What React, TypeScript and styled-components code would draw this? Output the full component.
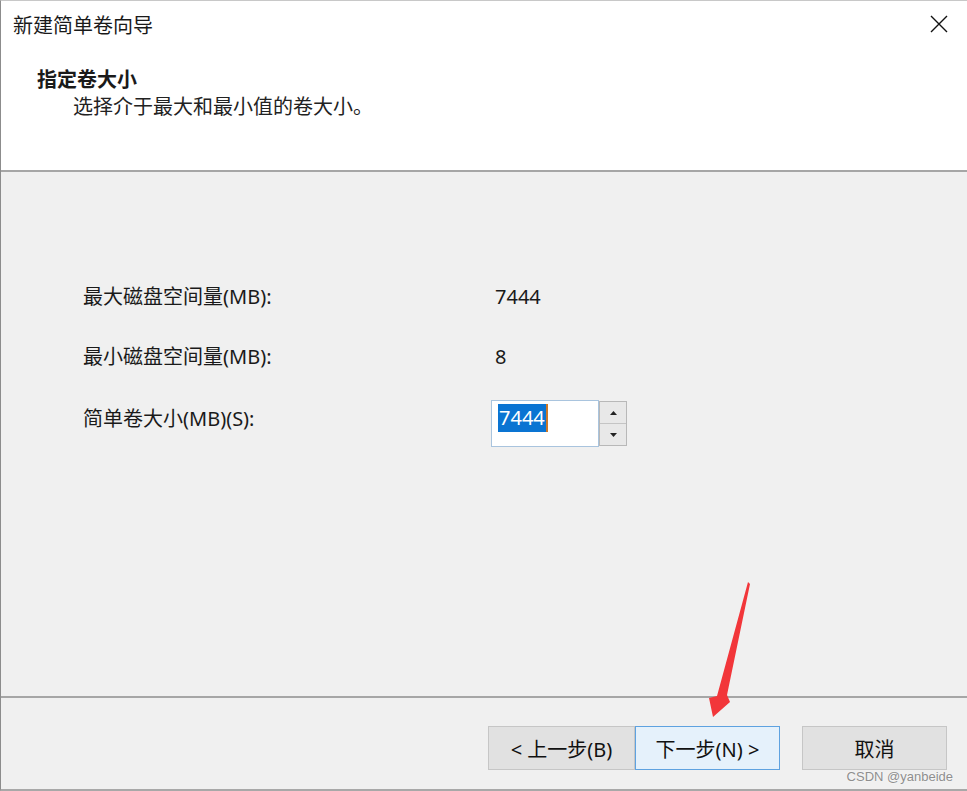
import styled, { createGlobalStyle } from 'styled-components'

const GlobalStyle = createGlobalStyle`
  html, body {
    margin: 0;
    padding: 0;
    background: #ffffff;
  }
  body {
    font-family: 'Noto Sans', 'Noto Sans CJK SC', sans-serif;
    color: #1a1a1a;
  }
`

const Window = styled.div`
  position: relative;
  box-sizing: border-box;
  width: 967px;
  height: 791px;
  display: flex;
  flex-direction: column;
  border-left: 1px solid #8c8c8c;
  border-top: 1px solid #c8c8c8;
  border-bottom: 2px solid #a8a8a8;
  background: #f0f0f0;
  overflow: hidden;
`

const Header = styled.div`
  height: 169px;
  flex-shrink: 0;
  background: #ffffff;
  display: flex;
  flex-direction: column;
  border-bottom: 2px solid #a6a6a6;
`

const TitleBar = styled.div`
  height: 46px;
  display: flex;
  align-items: center;
  justify-content: space-between;
  padding: 0 17px 0 12px;
`

const Title = styled.span`
  font-size: 20px;
`

const CloseButton = styled.button`
  width: 22px;
  height: 22px;
  padding: 0;
  border: none;
  background: transparent;
  display: flex;
  align-items: center;
  justify-content: center;
`

const Heading = styled.div`
  margin: 20px 0 0 36px;
  font-size: 20px;
  font-weight: 700;
  line-height: 26px;
`

const SubHeading = styled.div`
  margin: 1px 0 0 72px;
  font-size: 20px;
  line-height: 26px;
  color: #222;
`

const Body = styled.div`
  flex: 1;
  padding: 111px 0 0 82px;
  display: flex;
  flex-direction: column;
  gap: 32px;
`

const Row = styled.div<{ $tall?: boolean }>`
  display: grid;
  grid-template-columns: 408px auto;
  align-items: ${(p) => (p.$tall ? 'flex-start' : 'center')};
  height: ${(p) => (p.$tall ? '47px' : '28px')};
  margin-top: ${(p) => (p.$tall ? '-3px' : '0')};
`

const Label = styled.span<{ $offset?: number }>`
  font-size: 20px;
  line-height: 28px;
  padding-top: ${(p) => p.$offset ?? 0}px;
`

const Value = styled.span`
  font-size: 20px;
  line-height: 28px;
  padding-left: 4px;
`

const Spin = styled.div`
  display: flex;
  height: 47px;
`

const SpinInput = styled.div`
  box-sizing: border-box;
  width: 108px;
  height: 47px;
  background: #fff;
  border: 1px solid #a9c4de;
  padding: 3px 0 0 6px;
`

const Selected = styled.span`
  display: inline-block;
  background: #0a74d2;
  color: #fff;
  font-size: 20px;
  line-height: 28px;
  padding: 0 1px;
  border-right: 2px solid #c9782a;
`

const SpinButtons = styled.div`
  display: flex;
  flex-direction: column;
  width: 28px;
  height: 45px;
  margin-top: 1px;
  border: 1px solid #b8b8b8;
  box-sizing: border-box;
`

const SpinButton = styled.button<{ $down?: boolean }>`
  flex: 1;
  padding: 0;
  border: none;
  border-top: ${(p) => (p.$down ? '1px solid #c4c4c4' : 'none')};
  background: #e8e8e8;
  display: flex;
  align-items: center;
  justify-content: center;
`

const Footer = styled.div`
  height: 93px;
  flex-shrink: 0;
  border-top: 2px solid #a6a6a6;
  box-sizing: border-box;
  display: flex;
  justify-content: flex-end;
  align-items: flex-start;
  padding: 28px 20px 0 0;
`

const ButtonGroup = styled.div`
  display: flex;
  margin-right: 22px;
`

const DialogButton = styled.button<{ $primary?: boolean; $width: number }>`
  box-sizing: border-box;
  width: ${(p) => p.$width}px;
  height: 44px;
  font-family: inherit;
  font-size: 20px;
  color: #111;
  background: ${(p) => (p.$primary ? '#e5f1fb' : '#e1e1e1')};
  border: 1px solid ${(p) => (p.$primary ? '#5ea2e0' : '#c6c6c6')};
  padding: 0;
`

const Arrow = styled.svg`
  position: absolute;
  left: 0;
  top: 0;
  pointer-events: none;
`

const Watermark = styled.span`
  position: absolute;
  right: 14px;
  bottom: 5px;
  font-family: 'Liberation Sans', Arial, sans-serif;
  font-size: 13px;
  color: #8e8e8e;
  text-shadow: 0 0 2px #fff;
`

const App = () => {
  return (
    <>
      <GlobalStyle />
      <Window>
        <Header>
          <TitleBar>
            <Title>新建简单卷向导</Title>
            <CloseButton aria-label='关闭'>
              <svg width='18' height='18' viewBox='0 0 18 18'>
                <path d='M1 1 L17 17 M17 1 L1 17' stroke='#111' strokeWidth='1.4' fill='none' />
              </svg>
            </CloseButton>
          </TitleBar>
          <Heading>指定卷大小</Heading>
          <SubHeading>选择介于最大和最小值的卷大小。</SubHeading>
        </Header>
        <Body>
          <Row>
            <Label>最大磁盘空间量(MB):</Label>
            <Value>7444</Value>
          </Row>
          <Row>
            <Label>最小磁盘空间量(MB):</Label>
            <Value>8</Value>
          </Row>
          <Row $tall>
            <Label $offset={5}>简单卷大小(MB)(S):</Label>
            <Spin>
              <SpinInput>
                <Selected>7444</Selected>
              </SpinInput>
              <SpinButtons>
                <SpinButton aria-label='增加'>
                  <svg width='7' height='4' viewBox='0 0 7 4'>
                    <path d='M3.5 0 L7 4 L0 4 Z' fill='#222' />
                  </svg>
                </SpinButton>
                <SpinButton $down aria-label='减少'>
                  <svg width='7' height='4' viewBox='0 0 7 4'>
                    <path d='M0 0 L7 0 L3.5 4 Z' fill='#222' />
                  </svg>
                </SpinButton>
              </SpinButtons>
            </Spin>
          </Row>
        </Body>
        <Footer>
          <ButtonGroup>
            <DialogButton $width={147}>&lt; 上一步(B)</DialogButton>
            <DialogButton $primary $width={145}>下一步(N) &gt;</DialogButton>
          </ButtonGroup>
          <DialogButton $width={145}>取消</DialogButton>
        </Footer>
        <Arrow width='967' height='791' viewBox='0 0 967 791'>
          <polygon
            points='747,581 749,583 726,694 729,701 712,716 708,697 716,695'
            fill='#f2363a'
          />
        </Arrow>
        <Watermark>CSDN @yanbeide</Watermark>
      </Window>
    </>
  )
}

export default App
